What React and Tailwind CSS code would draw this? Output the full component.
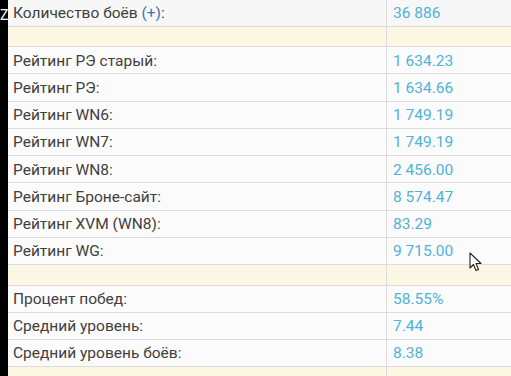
const rows1 = [
  ["Рейтинг РЭ старый:", "1 634.23"],
  ["Рейтинг РЭ:", "1 634.66"],
  ["Рейтинг WN6:", "1 749.19"],
  ["Рейтинг WN7:", "1 749.19"],
  ["Рейтинг WN8:", "2 456.00"],
  ["Рейтинг Броне-сайт:", "8 574.47"],
  ["Рейтинг XVM (WN8):", "83.29"],
  ["Рейтинг WG:", "9 715.00"],
];

const rows2 = [
  ["Процент побед:", "58.55%"],
  ["Средний уровень:", "7.44"],
  ["Средний уровень боёв:", "8.38"],
];

function Row({ label, value, h = "h-[27px]", bg = "bg-[#fbfbfb]" }) {
  return (
    <div className={`flex shrink-0 ${h} ${bg} border-b border-[#dcdcdc]`}>
      <div className="flex-1 flex items-center pl-[5px] pt-[2px] text-[#404040]">{label}</div>
      <div className="w-[125px] flex items-center pl-[6px] pt-[2px] border-l border-[#dcdcdc] text-[#4fb3d7]">{value}</div>
    </div>
  );
}

function Spacer({ h }) {
  return (
    <div className={`flex shrink-0 ${h} bg-[#fbf7e2] border-b border-[#dcdcdc]`}>
      <div className="flex-1" />
      <div className="w-[125px] border-l border-[#dcdcdc]" />
    </div>
  );
}

export default function App() {
  return (
    <div className="relative w-[511px] h-[376px] overflow-hidden flex bg-white text-[15.5px]" style={{ fontFamily: "Roboto, 'Noto Sans', sans-serif" }}>
      <div className="w-[8px] shrink-0 bg-black overflow-hidden">
        <div className="text-white text-[14px] leading-none pt-[8px]">Z</div>
      </div>
      <div className="flex-1 flex flex-col">
        <div className="flex shrink-0 h-[27px] bg-[#f7f7f7] border-b border-[#dcdcdc]">
          <div className="flex-1 flex items-center pl-[5px] pt-[2px] text-[#404040]">
            Количество боёв&nbsp;<span className="text-[#3a78b5]">(+)</span>:
          </div>
          <div className="w-[125px] flex items-center pl-[6px] pt-[2px] border-l border-[#dcdcdc] text-[#4fb3d7]">36 886</div>
        </div>
        <Spacer h="h-[20px]" />
        {rows1.map(([l, v]) => (
          <Row key={l} label={l} value={v} h="h-[27.25px]" />
        ))}
        <Spacer h="h-[21px]" />
        {rows2.map(([l, v]) => (
          <Row key={l} label={l} value={v} />
        ))}
        <Spacer h="h-[20px]" />
      </div>
      <svg className="absolute left-[469px] top-[252px]" width="14" height="20" viewBox="0 0 14 20">
        <path d="M1 1 L1 16 L4.5 12.5 L7 18.5 L9.5 17.5 L7 11.5 L12 11.5 Z" fill="white" stroke="#222" strokeWidth="1.1" strokeLinejoin="round" />
      </svg>
    </div>
  );
}
